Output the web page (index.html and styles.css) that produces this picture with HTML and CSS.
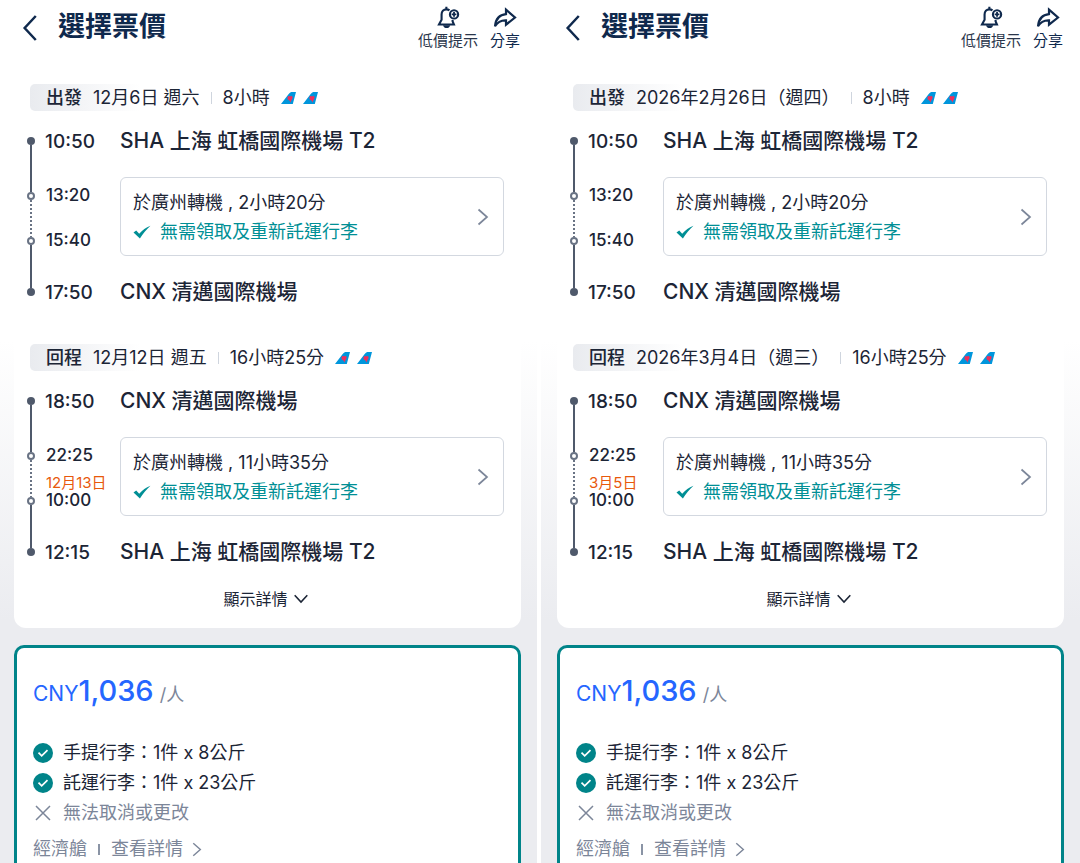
FILE: index.html
```html
<!DOCTYPE html>
<html lang="zh-Hant">
<head>
<meta charset="utf-8">
<meta name="viewport" content="width=device-width, initial-scale=1">
<title>選擇票價</title>
<link rel="stylesheet" href="styles.css">
</head>
<body>
<svg class="sprite" aria-hidden="true">
  <symbol id="i-back" viewBox="0 0 18 30"><path d="M15.500 1.500 3 15l12.500 13.500" fill="none" stroke="currentColor" stroke-width="2.800"/></symbol>
  <symbol id="i-bell" viewBox="0 0 24 24"><g fill="none" stroke="currentColor" stroke-width="2.200"><path d="M13.500 4.600C12.800 4 11.600 3.500 10.300 3.500c-3 0-5 2.300-5 5.300v5.500L2.600 19.300h15.600L16.800 16v-1.500M10.300 .8v2.700"/><circle cx="18.300" cy="8.800" r="4.300"/><path d="M18.300 6.300v5M15.800 8.800h5" stroke-width="1.900"/></g><path d="M6.800 20h7.500c-.5 2-2 3-3.700 3s-3.300-1-3.800-3z" fill="currentColor"/></symbol>
  <symbol id="i-share" viewBox="0 0 24 22"><path d="M13 3.200 22 11l-9 7.200v-4.400C8 13.600 4.500 15.500 2 19.800 2.600 13 6 8.200 13 7.600z" fill="none" stroke="currentColor" stroke-width="2.200"/></symbol>
  <symbol id="i-tail" viewBox="0 0 15 12"><path d="M0 12 7.500 2.200C8.700.6 9.800 0 11.500 0H15l-3.200 12z" fill="#0096dc"/><path d="M6.500 5.600C7 4 8.200 3.700 9 4.600c1-1 2.600-.5 2.600 1 0 1.700-1.400 2.200-2 5.200C9.300 9.300 8.600 8.600 7.600 8c-.9-.6-1.400-1.400-1.100-2.400z" fill="#ee2f5b"/></symbol>
  <symbol id="i-check" viewBox="0 0 18 14"><path d="M.5 7.400 3.200 5.400l3 3.300C9.500 5.200 12.800 2.700 17.500.8 13.200 4.800 10 8.600 6.900 13.500z" fill="currentColor"/></symbol>
  <symbol id="i-right" viewBox="0 0 12 18"><path d="M1.500 1.500 10 9l-8.500 7.500" fill="none" stroke="currentColor" stroke-width="1.700"/></symbol>
  <symbol id="i-down" viewBox="0 0 14 10"><path d="M.7 1.300 7 8l6.300-6.700" fill="none" stroke="currentColor" stroke-width="1.600"/></symbol>
  <symbol id="i-ok" viewBox="0 0 20 20"><circle cx="10" cy="10" r="10" fill="#008489"/><path d="m5.500 9.700 3.200 3.200 5.800-5.700" fill="none" stroke="#fff" stroke-width="1.700"/></symbol>
  <symbol id="i-cross" viewBox="0 0 20 20"><path d="m3 3 14 14M17 3 3 17" fill="none" stroke="currentColor" stroke-width="1.500"/></symbol>
</svg>
<main class="compare">
  <section class="panel">
    <header class="topbar">
      <button class="back" aria-label="返回"><svg><use href="#i-back"/></svg></button>
      <h1>選擇票價</h1>
      <button class="action"><svg><use href="#i-bell"/></svg><span>低價提示</span></button>
      <button class="action share"><svg><use href="#i-share"/></svg><span>分享</span></button>
    </header>
    <article class="trip">
      <section class="leg">
        <div class="leg-head"><strong>出發</strong><span>12月6日 週六</span><i class="sep"></i><span>8小時</span><span class="tails"><svg><use href="#i-tail"/></svg><svg><use href="#i-tail"/></svg></span></div>
        <div class="journey">
          <div class="rail"><i class="dot"></i><i class="line"></i><i class="ring"></i><i class="line dots"></i><i class="ring"></i><i class="line end"></i><i class="dot"></i></div>
          <time class="stop">10:50</time><div class="stop">SHA 上海 虹橋國際機場 T2</div>
          <div class="layover"><time>13:20</time><div><time>15:40</time></div></div>
          <button class="transfer"><span class="info"><span>於廣州轉機 , 2小時20分</span><span class="through"><svg><use href="#i-check"/></svg>無需領取及重新託運行李</span></span><svg class="go"><use href="#i-right"/></svg></button>
          <time class="stop">17:50</time><div class="stop">CNX 清邁國際機場</div>
        </div>
      </section>
      <section class="leg">
        <div class="leg-head"><strong>回程</strong><span>12月12日 週五</span><i class="sep"></i><span>16小時25分</span><span class="tails"><svg><use href="#i-tail"/></svg><svg><use href="#i-tail"/></svg></span></div>
        <div class="journey">
          <div class="rail"><i class="dot"></i><i class="line"></i><i class="ring"></i><i class="line dots"></i><i class="ring"></i><i class="line end"></i><i class="dot"></i></div>
          <time class="stop">18:50</time><div class="stop">CNX 清邁國際機場</div>
          <div class="layover"><time>22:25</time><div><em>12月13日</em><time>10:00</time></div></div>
          <button class="transfer"><span class="info"><span>於廣州轉機 , 11小時35分</span><span class="through"><svg><use href="#i-check"/></svg>無需領取及重新託運行李</span></span><svg class="go"><use href="#i-right"/></svg></button>
          <time class="stop">12:15</time><div class="stop">SHA 上海 虹橋國際機場 T2</div>
        </div>
      </section>
      <button class="more">顯示詳情<svg><use href="#i-down"/></svg></button>
    </article>
    <article class="fare">
      <p class="price"><span class="currency">CNY</span><b>1,036</b><span class="per">/人</span></p>
      <ul>
        <li><svg><use href="#i-ok"/></svg>手提行李：1件 x 8公斤</li>
        <li><svg><use href="#i-ok"/></svg>託運行李：1件 x 23公斤</li>
        <li class="no"><svg><use href="#i-cross"/></svg>無法取消或更改</li>
      </ul>
      <div class="cabin"><span>經濟艙</span><i></i><button>查看詳情<svg><use href="#i-right"/></svg></button></div>
    </article>
  </section>

  <section class="panel">
    <header class="topbar">
      <button class="back" aria-label="返回"><svg><use href="#i-back"/></svg></button>
      <h1>選擇票價</h1>
      <button class="action"><svg><use href="#i-bell"/></svg><span>低價提示</span></button>
      <button class="action share"><svg><use href="#i-share"/></svg><span>分享</span></button>
    </header>
    <article class="trip">
      <section class="leg">
        <div class="leg-head"><strong>出發</strong><span>2026年2月26日（週四）</span><i class="sep"></i><span>8小時</span><span class="tails"><svg><use href="#i-tail"/></svg><svg><use href="#i-tail"/></svg></span></div>
        <div class="journey">
          <div class="rail"><i class="dot"></i><i class="line"></i><i class="ring"></i><i class="line dots"></i><i class="ring"></i><i class="line end"></i><i class="dot"></i></div>
          <time class="stop">10:50</time><div class="stop">SHA 上海 虹橋國際機場 T2</div>
          <div class="layover"><time>13:20</time><div><time>15:40</time></div></div>
          <button class="transfer"><span class="info"><span>於廣州轉機 , 2小時20分</span><span class="through"><svg><use href="#i-check"/></svg>無需領取及重新託運行李</span></span><svg class="go"><use href="#i-right"/></svg></button>
          <time class="stop">17:50</time><div class="stop">CNX 清邁國際機場</div>
        </div>
      </section>
      <section class="leg">
        <div class="leg-head"><strong>回程</strong><span>2026年3月4日（週三）</span><i class="sep"></i><span>16小時25分</span><span class="tails"><svg><use href="#i-tail"/></svg><svg><use href="#i-tail"/></svg></span></div>
        <div class="journey">
          <div class="rail"><i class="dot"></i><i class="line"></i><i class="ring"></i><i class="line dots"></i><i class="ring"></i><i class="line end"></i><i class="dot"></i></div>
          <time class="stop">18:50</time><div class="stop">CNX 清邁國際機場</div>
          <div class="layover"><time>22:25</time><div><em>3月5日</em><time>10:00</time></div></div>
          <button class="transfer"><span class="info"><span>於廣州轉機 , 11小時35分</span><span class="through"><svg><use href="#i-check"/></svg>無需領取及重新託運行李</span></span><svg class="go"><use href="#i-right"/></svg></button>
          <time class="stop">12:15</time><div class="stop">SHA 上海 虹橋國際機場 T2</div>
        </div>
      </section>
      <button class="more">顯示詳情<svg><use href="#i-down"/></svg></button>
    </article>
    <article class="fare">
      <p class="price"><span class="currency">CNY</span><b>1,036</b><span class="per">/人</span></p>
      <ul>
        <li><svg><use href="#i-ok"/></svg>手提行李：1件 x 8公斤</li>
        <li><svg><use href="#i-ok"/></svg>託運行李：1件 x 23公斤</li>
        <li class="no"><svg><use href="#i-cross"/></svg>無法取消或更改</li>
      </ul>
      <div class="cabin"><span>經濟艙</span><i></i><button>查看詳情<svg><use href="#i-right"/></svg></button></div>
    </article>
  </section>
</main>
</body>
</html>
```

FILE: styles.css
```css
* { box-sizing: border-box; }
body {
  margin: 0;
  background: #fff;
  color: #1c2536;
  font: 18px/26px Inter, "Noto Sans CJK TC", sans-serif;
  overflow-x: hidden;
}
h1, p, ul { margin: 0; padding: 0; }
ul { list-style: none; }
button {
  margin: 0;
  padding: 0;
  border: 0;
  background: none;
  color: inherit;
  font: inherit;
  text-align: left;
  white-space: nowrap;
  cursor: pointer;
}
svg { display: block; flex: none; }
.sprite { position: absolute; width: 0; height: 0; }

.compare {
  display: grid;
  grid-template-columns: 1fr 1fr;
  gap: 4px;
  margin-left: -2px;
}
.panel {
  min-width: 0;
  padding: 0 16px;
  background: linear-gradient(#fff 340px, #ebecf0 620px);
}

.topbar {
  display: flex;
  align-items: flex-start;
  height: 84px;
  padding: 6px 1px 0 8px;
  color: #0f294d;
}
.back { margin: 7px 20px 0 0; }
.back svg { width: 16px; height: 30px; }
h1 { margin-right: auto; font-size: 27px; line-height: 42px; font-weight: 600; white-space: nowrap; }
.action {
  display: flex;
  flex-direction: column;
  align-items: center;
  margin-left: 12px;
  color: #2a364b;
  font-size: 15px;
  line-height: 24px;
}
.action svg { width: 24px; height: 23px; color: #0f294d; }
.action.share { color: #0f294d; }

.trip {
  padding: 0 17px 16px 13px;
  border-radius: 0 0 12px 12px;
  background: #fff;
}
.leg { padding-bottom: 38px; }
.leg-head {
  display: flex;
  align-items: center;
  height: 27px;
  margin-left: 3px;
  padding-left: 16px;
  border-radius: 5px;
  background: linear-gradient(90deg, #e9ebef, #fff 110px);
  line-height: 28px;
  white-space: nowrap;
}
.leg-head strong { margin-right: 11px; font-weight: 500; }
.sep { width: 1px; height: 12px; margin: 0 11px; background: #cfd5de; }
.tails { display: flex; gap: 7px; margin-left: 11px; }
.tails svg { width: 15px; height: 12px; }

.journey {
  display: grid;
  grid-template-columns: 8px 85px 1fr;
  grid-template-rows: 28px auto 28px;
  row-gap: 22px;
  margin-top: 16px;
}
.rail {
  grid-row: 1 / 4;
  display: flex;
  flex-direction: column;
  align-items: center;
  padding: 10px 0;
}
.dot, .ring { flex: none; width: 8px; height: 8px; border-radius: 50%; }
.dot { background: #4f596b; }
.ring { border: 2px solid #697384; }
.line { flex: 47 0 0; width: 2px; background: #4f596b; }
.line.dots { flex-grow: 37; background: repeating-linear-gradient(#697384 0 2px, #fff 2px 4px); }
.line.end { flex-grow: 43; }
.stop { font-size: 21px; line-height: 28px; font-weight: 500; white-space: nowrap; }
.journey time.stop { padding-left: 10px; font-size: 19px; line-height: 30px; }
.layover {
  display: flex;
  flex-direction: column;
  justify-content: space-between;
  padding: 8px 0 6px 11px;
  font-size: 17px;
  font-weight: 500;
  line-height: 20px;
}
.layover time { display: block; }
.layover em {
  display: block;
  color: #e8590c;
  font-size: 15px;
  line-height: 14px;
  font-style: normal;
  font-weight: 400;
  white-space: nowrap;
}
.transfer {
  display: flex;
  align-items: center;
  justify-content: space-between;
  height: 79px;
  padding: 0 14px 0 12px;
  border: 1px solid #d3d8e0;
  border-radius: 6px;
}
.info { display: grid; row-gap: 3px; padding-top: 1px; }
.through { display: flex; align-items: center; gap: 9px; color: #008f95; }
.through svg { width: 18px; height: 14px; }
.go { width: 12px; height: 18px; color: #7c8699; }

.more {
  display: flex;
  align-items: center;
  gap: 6px;
  margin: -18px auto 0;
  font-size: 16px;
}
.more svg { width: 14px; height: 10px; }

.fare {
  margin-top: 17px;
  padding: 24px 16px 0;
  border: 3px solid #008489;
  border-bottom: 0;
  border-radius: 10px 10px 0 0;
  background: #fff;
}
.price { display: flex; align-items: baseline; color: #2566ff; line-height: 38px; }
.currency { font-size: 21px; }
.price b { font-size: 29px; font-weight: 500; }
.per { margin-left: 6px; color: #7c8699; }
.fare ul { margin-top: 24px; }
.fare li { display: flex; align-items: center; gap: 10px; height: 30px; }
.fare li svg { width: 20px; height: 20px; }
.fare .no, .cabin { color: #7c8699; }
.cabin { display: flex; align-items: center; height: 34px; margin-top: 4px; }
.cabin i { width: 2px; height: 11px; margin: 0 11px; background: #8a94a5; }
.cabin button { display: flex; align-items: center; gap: 9px; }
.cabin svg { width: 10px; height: 15px; }
```
